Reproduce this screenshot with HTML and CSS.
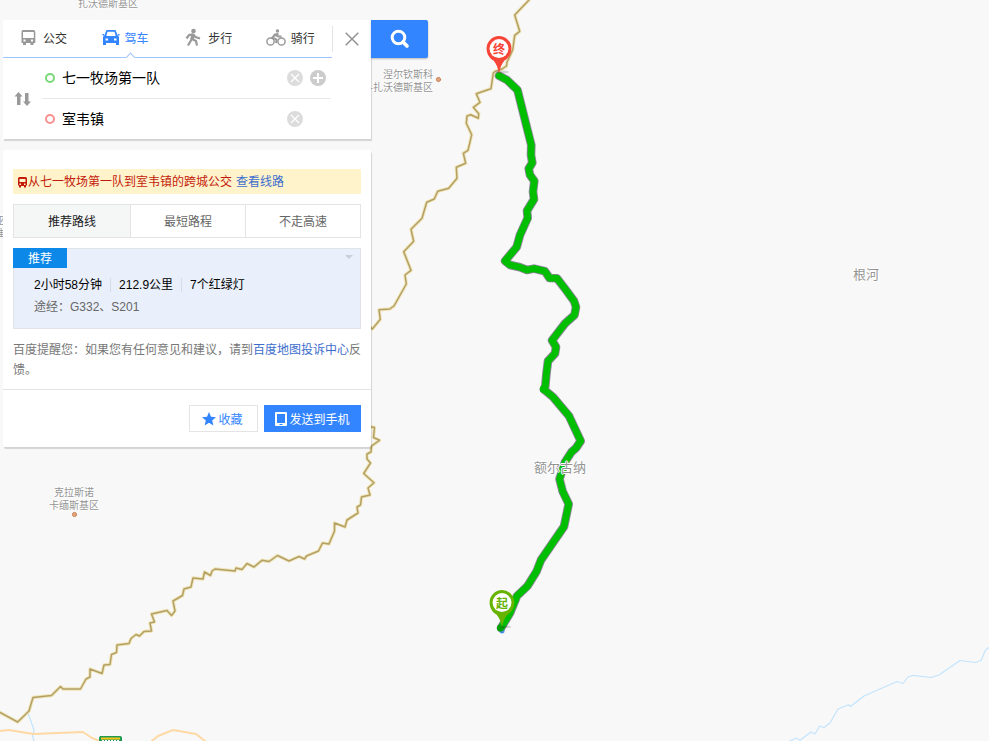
FILE: index.html
```html
<!DOCTYPE html>
<html lang="zh-CN">
<head>
<meta charset="utf-8">
<title>百度地图</title>
<link rel="stylesheet" href="styles.css">
</head>
<body>
<div class="app">
  <div class="map">
    <svg class="map-lines" width="989" height="741" viewBox="0 0 989 741" fill="none" stroke-linejoin="round" stroke-linecap="round">
      <!-- rivers -->
      <g stroke="#c3e4fd" stroke-width="1.2">
        <path d="M28 713L34 730L32.5 736L34 741"/>
        <path d="M790 741L796 738L800 740.300L811 732L815 734L819.500 726L824 727.500L830 723L838 709L848.500 704.700L850.500 706.500L864 696L897 681.500L903 683.500L908 677L913 675.300L931 677.500L939 675L960 660.500L975 662.500L981 660.500L985.500 650L989 647.500"/>
      </g>
      <!-- roads -->
      <g stroke="#fed9a5" stroke-width="2">
        <path d="M0 731L9 730L33 734L83 732L92 738L100 741"/>
        <path d="M152 741L158 736L173 730L196 734L205 741"/>
      </g>
      <!-- national border -->
      <g id="border">
        <g stroke="#eee4b8" stroke-width="3.4">
          <path id="b1" d="M529 0L514.700 15L519.700 31.300L514.700 35.300L512.700 50L507 62L506.500 66L502 69L495 71.500L493.300 73L491 88.700L476.300 93.700L480 102.300L473.300 107.300L478.700 113.700L478.300 118.300L470.700 114.700L467 116L466.300 123.300L471.700 134.700L468 150.300L463.300 153.300L465.700 163.300L456.300 167.300L457 178.300L448.700 188.300L437.700 191.300L434.300 199L426.700 202.300L422 218.300L411 229.300L413.700 241.300L403.700 251.700L411 270.300L405 275L406.300 284L394 306L389.700 309L379 309.700L380.300 319.300L372.300 329L368 325"/>
          <path id="b2" d="M366 426L374.500 427.500L373.500 437.500L379.500 440.300L371.500 446L371 452L367 454L367 459L370.500 463L363.700 473.500L374 482.700L368 488L370 495L361.500 497L360.500 505L357 507L358 513L347 520L345 527L334.500 523L334.500 531L329 544L322.500 543L318.500 551L306.500 556L304.500 559L299 556.500L289 561L277.500 555.500L269 561.500L262 560.300L254 567L247 563.500L242 569.500L236 568L235 571L215 569L212 571L210.500 575.500L204.500 572L203 579L193 578L191 587L184 589L182.500 595.500L173 601L175 611L171.500 615.500L167 610.500L151.500 614L154.500 622L150 623L151.500 631L144 631.500L139.500 636L136 634.500L131 638.500L129 643.500L117 645L116.500 652.500L111.500 654.500L110 664.500L104 665L102 673.500L90 669L90 677L86 679L80.500 689L63 689L60.500 686.500L51.500 695.500L33 697.500L29 711L17.700 722L0 712.500"/>
        </g>
        <g stroke="#b4a064" stroke-width="1.5">
          <path d="M529 0L514.700 15L519.700 31.300L514.700 35.300L512.700 50L507 62L506.500 66L502 69L495 71.500L493.300 73L491 88.700L476.300 93.700L480 102.300L473.300 107.300L478.700 113.700L478.300 118.300L470.700 114.700L467 116L466.300 123.300L471.700 134.700L468 150.300L463.300 153.300L465.700 163.300L456.300 167.300L457 178.300L448.700 188.300L437.700 191.300L434.300 199L426.700 202.300L422 218.300L411 229.300L413.700 241.300L403.700 251.700L411 270.300L405 275L406.300 284L394 306L389.700 309L379 309.700L380.300 319.300L372.300 329L368 325"/>
          <use href="#b2"/>
        </g>
      </g>
      <!-- driving route -->
      <path stroke="#8a8794" stroke-width="8.600" d="M499 75.700L507 80L517.500 90L521 104L526 124L531.300 145L531 155L532.300 162.700L528.700 168.700L530 175L534.300 181L533 191.700L534 199.300L527 210.700L527.700 218L520 235L516.700 247L505 261L510 265L520 267.300L527 270L534 268.600L545 271.300L549.500 278L557 278.300L566 290L574 301L576 307L574.500 315L565 323.500L552 340.300L556 347L555 353.500L548 361L546.500 373L545.300 386L544 389.500L553 397L569 416L580.700 441L576 448L571.500 452L565 462L559.500 479L562.700 491.500L568.700 504L564 526.500L541 560L536.500 571.500L527.500 586L517 596L510 613L501 628"/>
      <path stroke="#00bf00" stroke-width="6.800" d="M499 75.700L507 80L517.500 90L521 104L526 124L531.300 145L531 155L532.300 162.700L528.700 168.700L530 175L534.300 181L533 191.700L534 199.300L527 210.700L527.700 218L520 235L516.700 247L505 261L510 265L520 267.300L527 270L534 268.600L545 271.300L549.500 278L557 278.300L566 290L574 301L576 307L574.500 315L565 323.500L552 340.300L556 347L555 353.500L548 361L546.500 373L545.300 386L544 389.500L553 397L569 416L580.700 441L576 448L571.500 452L565 462L559.500 479L562.700 491.500L568.700 504L564 526.500L541 560L536.500 571.500L527.500 586L517 596L510 613L501 628"/>
      <circle cx="544" cy="389" r="4.300" fill="#00bf00"/>
      <circle cx="502" cy="631" r="2.500" fill="#4d8fe0"/>
      <circle cx="500.500" cy="628" r="3.500" fill="#00a000"/>
      <!-- highway shield -->
      <rect x="99.500" y="736.500" width="22" height="12" rx="1" fill="#1f9a50" stroke="#1f9a50"/>
      <path d="M101 738.500H120" stroke="#ffc61a" stroke-width="2" stroke-linecap="butt"/>
      <path d="M102 740.500H119" stroke="#fff" stroke-dasharray="2 1" stroke-linecap="butt"/>
      <!-- town dots -->
      <g fill="#e0a780" stroke="#c78459"><circle cx="438.500" cy="79.500" r="2.100"/><circle cx="74.500" cy="514.500" r="2.100"/></g>
    </svg>
    <div class="label town l-top">扎沃德斯基区</div>
    <div class="label town l-nie">涅尔钦斯科<br>-扎沃德斯基区</div>
    <div class="label town l-kla">克拉斯诺<br>卡缅斯基区</div>
    <div class="label town l-edge">亚<br>维</div>
    <div class="label city l-gen">根河</div>
    <div class="label city l-erg">额尔古纳</div>
    <div class="pin pin-end">
      <svg width="26" height="38" viewBox="0 0 26 38"><ellipse cx="17" cy="36" rx="6" ry="1.500" fill="#000" opacity=".15"/><path d="M13 0A12.400 12.400 0 0 0 .6 12.400C.6 18.500 4 22.500 7.500 24.500C10.500 28 12 32 13 37.500C14 32 15.500 28 18.500 24.500C22 22.500 25.400 18.500 25.400 12.400A12.400 12.400 0 0 0 13 0Z" fill="#f74538"/><circle cx="13" cy="12.600" r="9.500" fill="#fff"/></svg>
      <span>终</span>
    </div>
    <div class="pin pin-start">
      <svg width="26" height="38" viewBox="0 0 26 38"><ellipse cx="17" cy="37" rx="5" ry="1.500" fill="#000" opacity=".15"/><path d="M13 0A12.400 12.400 0 0 0 .6 12.400C.6 18.500 4 22.500 7.500 24.500C10.500 28 12 32 13 37.500C14 32 15.500 28 18.500 24.500C22 22.500 25.400 18.500 25.400 12.400A12.400 12.400 0 0 0 13 0Z" fill="#66b300"/><circle cx="13" cy="12.600" r="9.500" fill="#fff"/></svg>
      <span>起</span>
    </div>
  </div>

  <div class="overlay">
    <div class="search">
      <section class="panel query">
        <div class="query-head">
          <nav class="tabs">
            <a class="tab"><svg width="20" height="20" viewBox="0 0 20 20"><path fill="#999" fill-rule="evenodd" d="M5 2H15.500Q17.300 2 17.300 4V15H15.500V17H12.500V15H8V17H5V15H3.500V4Q3.500 2 5 2ZM5 4V10H15.800V4ZM5.500 11.500V13.500H7.500V11.500ZM13 11.500V13.500H15V11.500Z"/></svg>公交</a>
            <a class="tab active"><svg width="20" height="20" viewBox="0 0 20 20"><path fill="#3385ff" fill-rule="evenodd" d="M5.500 2H14.500L16.500 7L18 9V17H15V15H5V17H2V9L3.500 7ZM6.500 3.800L5.300 8H14.700L13.500 3.800ZM4.500 10.500V12.500H7V10.500ZM13 10.500V12.500H15.500V10.500ZM1.500 6H3V7.500H1.500ZM17 6H18.500V7.500H17Z"/></svg>驾车</a>
            <a class="tab"><svg width="20" height="20" viewBox="0 0 20 20" fill="none" stroke="#999" stroke-width="2.200"><circle cx="10.500" cy="3" r="2.300" fill="#999" stroke="none"/><path d="M3.500 10.500L6 7L10 6.500L12.500 9L17 10.500M10 6.500L8.500 11.500L5 17.500M9 11L13 13L14 17.500"/><path stroke-width="3.500" d="M10 6L9 11.500"/></svg>步行</a>
            <a class="tab"><svg width="20" height="20" viewBox="0 0 20 20" fill="none" stroke="#999"><g stroke-width="1.500"><circle cx="4.500" cy="13.500" r="3.600"/><circle cx="15.500" cy="13.500" r="3.600"/></g><circle cx="11.500" cy="3" r="1.700" fill="#999" stroke="none"/><path stroke-width="2" d="M12.500 6L9 6.500L6.500 9.500L10.500 11.500L10 15M9.500 7L12.500 8.500H15.500"/></svg>骑行</a>
          </nav>
          <button class="close" aria-label="关闭"><svg width="14" height="14" viewBox="0 0 14 14" stroke="#8e8e8e" stroke-width="1.400"><path d="M.7 .7L13.300 13.300M13.300 .7L.7 13.300"/></svg></button>
        </div>
        <div class="points">
          <button class="swap" aria-label="切换"><svg width="18" height="14" viewBox="0 0 18 14" fill="#999"><path d="M4.500 0L8.500 4.500H6.500V13H3V4.500H.5ZM13 14L9 9.500H11V1H14.500V9.500H17Z"/></svg></button>
          <div class="fields">
            <div class="field"><i class="ring green"></i><span>七一牧场第一队</span><svg class="acts" width="39" height="16" viewBox="0 0 39 16" stroke="#fff"><g fill="#dcdcdc" stroke="none"><circle cx="8" cy="8" r="8"/><circle cx="31" cy="8" r="8" fill="#ccc"/></g><path stroke-width="1.300" d="M4 4L12 12M12 4L4 12"/><path stroke-width="2" d="M31 3V13M26 8H36"/></svg></div>
            <div class="field last"><i class="ring red"></i><span>室韦镇</span><svg class="acts" width="39" height="16" viewBox="0 0 39 16" stroke="#fff"><circle cx="8" cy="8" r="8" fill="#dcdcdc" stroke="none"/><path stroke-width="1.300" d="M4 4L12 12M12 4L4 12"/></svg></div>
          </div>
        </div>
      </section>
      <button class="go" aria-label="搜索"><svg width="20" height="20" viewBox="0 0 20 20" fill="none" stroke="#fff"><circle cx="8.500" cy="8.500" r="6.300" stroke-width="3"/><path d="M13 13L17 17" stroke-width="3.700" stroke-linecap="round"/></svg></button>
    </div>

    <section class="panel result">
      <div class="result-body">
        <div class="notice"><svg width="10" height="11" viewBox="0 0 10 11"><path fill="#c31a09" fill-rule="evenodd" d="M1.500 0H7.500Q9 0 9 1.500V8.500H8V10.500H6V9H3V10.500H1V8.500H0V1.500Q0 0 1.500 0ZM1.500 2V5H7.500V2ZM1.500 6.500V8H3V6.500ZM6 6.500V8H7.500V6.500Z"/></svg><span>从七一牧场第一队到室韦镇的跨城公交</span><a>查看线路</a></div>
        <div class="modes"><span class="mode on">推荐路线</span><span class="mode">最短路程</span><span class="mode">不走高速</span></div>
        <article class="plan">
          <div class="plan-top"><b class="badge">推荐</b><i class="caret"></i></div>
          <div class="facts"><span>2小时58分钟</span><span>212.9公里</span><span>7个红绿灯</span></div>
          <div class="via">途经：G332、S201</div>
        </article>
        <p class="tip">百度提醒您：如果您有任何意见和建议，请到<a>百度地图投诉中心</a>反馈。</p>
      </div>
      <footer class="actions">
        <button class="btn"><svg width="14" height="14" viewBox="0 0 14 14"><path fill="#3385ff" d="M7 0L9 4.800L14 5.200L10.200 8.500L11.400 13.500L7 10.800L2.600 13.500L3.800 8.500L0 5.200L5 4.800Z"/></svg><span>收藏</span></button>
        <button class="btn primary"><svg width="12" height="14" viewBox="0 0 12 14"><path fill="#fff" fill-rule="evenodd" d="M1 0H11Q12 0 12 1V13Q12 14 11 14H1Q0 14 0 13V1Q0 0 1 0ZM2 2V11H10V2ZM4.500 12V13H7.500V12Z"/></svg><span>发送到手机</span></button>
      </footer>
    </section>
  </div>
</div>
</body>
</html>
```
FILE: styles.css
```css
* { box-sizing: border-box; }
body { margin: 0; font: 12px/20px "Liberation Sans", "Noto Sans CJK SC", sans-serif; color: #333; }
button { margin: 0; padding: 0; border: 0; background: none; font: inherit; }
svg { display: block; flex: none; }
.app { position: relative; width: 989px; height: 741px; overflow: hidden; background: #f8f8f8; }

.map { position: absolute; inset: 0; }
.map-lines { position: absolute; left: 0; top: 0; }
.label { position: absolute; white-space: nowrap; font-family: "Noto Sans CJK SC", sans-serif; color: #949494; text-shadow: 1px 0 #fff, -1px 0 #fff, 0 1px #fff, 0 -1px #fff; }
.town { font-size: 10px; line-height: 13px; text-align: center; }
.city { font-size: 13px; line-height: 18px; }
.l-top { left: 78px; top: -4px; }
.l-nie { right: 556px; top: 67px; text-align: right; }
.l-kla { left: 49px; top: 485px; }
.l-edge { right: 985px; top: 213px; }
.l-gen { left: 853px; top: 265px; }
.l-erg { left: 534px; top: 458px; }
.pin { position: absolute; width: 26px; height: 38px; }
.pin span { position: absolute; left: 0; top: 4px; width: 26px; text-align: center; font: bold 12px/17px "Noto Sans CJK SC", sans-serif; }
.pin-end { left: 486px; top: 36px; color: #f74538; }
.pin-start { left: 489px; top: 590px; color: #66b300; }

.overlay { position: relative; display: flex; flex-direction: column; gap: 11px; padding: 20px 0 0 3px; }
.search { display: flex; align-items: flex-start; }
.panel { width: 368px; background: #fff; box-shadow: 1px 2px 1px rgba(0, 0, 0, .15); }
.query { height: 119px; border-radius: 2px 0 0 0; }
.query-head { display: flex; height: 38px; }
.tabs { display: flex; width: 329px; padding-left: 15px; border-bottom: 1px solid #9ec6ff; }
.tab { position: relative; display: flex; flex: none; align-items: center; gap: 5px; width: 82.6px; height: 38px; }
.tab svg { margin-bottom: 2px; }
.tab:nth-child(2) { gap: 4px; }
.active { color: #3385ff; }
.active::after { content: ""; position: absolute; left: 26px; bottom: -3px; width: 6px; height: 6px; background: #fff; border: solid #9ec6ff; border-width: 1px 0 0 1px; transform: rotate(45deg); }
.close { display: flex; align-items: center; justify-content: center; width: 39px; height: 26px; margin-top: 6px; border-left: 1px solid #e4e4e4; }
.points { display: flex; height: 81px; }
.swap { width: 39px; padding-left: 11px; }
.fields { width: 289px; }
.field { display: flex; align-items: center; height: 41px; font-size: 14px; color: #000; }
.field:first-child { border-bottom: 1px solid #e8e8e8; }
.field.last { height: 39px; }
.ring { width: 10px; height: 10px; margin: 0 7px 0 3px; border: 2px solid #79d979; border-radius: 50%; }
.ring.red { border-color: #fb8f8f; }
.acts { margin: 0 5px 0 auto; }
.go { display: flex; align-items: center; justify-content: center; width: 57px; height: 38px; background: #3385ff; border-radius: 0 2px 2px 0; box-shadow: 0 1px 2px rgba(0, 0, 0, .25); }

.result { height: 297px; border-radius: 2px; }
.result-body { height: 240px; padding: 19px 10px 0; border-bottom: 1px solid #e4e4e4; }
.notice { display: flex; align-items: center; height: 25px; padding: 1px 0 0 5px; background: #fff3cc; color: #c31a09; }
.notice a { margin-left: 4px; color: #3d6dcc; }
.modes { display: flex; height: 34px; margin-top: 10px; border: 1px solid #e4e4e4; }
.mode { flex: 1; line-height: 34px; height: 32px; text-align: center; color: #666; }
.mode + .mode { border-left: 1px solid #e4e4e4; }
.mode.on { flex: none; width: 116px; background: #f5f7f7; color: #222; }
.plan { height: 81px; margin-top: 10px; border: 1px solid #e0e4e8; background: #eaf0fb; }
.plan-top { display: flex; justify-content: space-between; margin: -1px 0 0 -1px; }
.badge { width: 54px; height: 20px; background: #0c88e8; color: #fff; font-weight: normal; line-height: 22px; text-align: center; }
.caret { margin: 7px 7px 0 0; width: 8px; height: 4px; background: #c9ced8; clip-path: polygon(0 0, 100% 0, 50% 100%); }
.facts { display: flex; align-items: center; height: 20px; margin: 7px 0 0 20px; color: #000; line-height: 14px; }
.facts span + span { margin-left: 8px; padding-left: 8px; border-left: 1px solid #d8dde4; }
.via { margin: 2px 0 0 20px; color: #666; }
.tip { margin: 11px 0 0; width: 350px; color: #777; }
.tip a { color: #3d6dcc; }
.actions { display: flex; justify-content: flex-end; gap: 6px; padding: 15px 10px 0; }
.btn { display: flex; align-items: center; justify-content: center; gap: 2px; width: 69px; height: 27px; padding-right: 2px; border: 1px solid #e4e4e4; color: #3385ff; }
.btn span { padding-top: 2px; }
.primary { width: 97px; padding-right: 0; background: #3385ff; border-color: #3385ff; color: #fff; }
```
